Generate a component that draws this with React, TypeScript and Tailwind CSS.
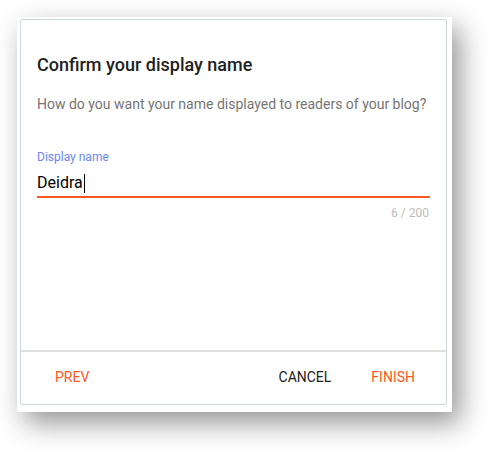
import React from "react";

export default function App() {
  return (
    <div
      className="w-[500px] h-[460px] bg-white pt-[17px] pl-[17px]"
      style={{ fontFamily: "Roboto, 'Noto Sans', Arial, sans-serif" }}
    >
      <div className="w-[435px] h-[395px] bg-white pt-[2px] pl-[3px] shadow-[8px_11px_26px_rgba(0,0,0,0.42)]">
        <div className="w-[427px] h-[386px] border border-[#cfd6dc] rounded-[3px] flex flex-col">
          <div className="flex-1 pl-[16px] pr-[16px] pt-[33px]">
            <div className="text-[18px] leading-[24px] font-medium text-[#212121]">
              Confirm your display name
            </div>
            <div className="mt-[17px] text-[14px] leading-[20px] text-[#757575]">
              How do you want your name displayed to readers of your blog?
            </div>
            <div className="mt-[35px] text-[12px] leading-[16px] text-[#6a86f5]">
              Display name
            </div>
            <div className="mt-[6px] flex items-center h-[24px] text-[16px] leading-[24px] text-black">
              <span>Deidra</span>
              <span className="inline-block w-[1px] h-[19px] bg-black ml-[1px]" />
            </div>
            <div className="mt-[1px] h-[2px] bg-[#ff5722] w-[393px]" />
            <div className="mt-[7px] text-right pr-[1px] text-[12px] leading-[16px] text-[#bdbdbd] w-[393px]">
              6 / 200
            </div>
          </div>
          <div className="h-[2px] bg-[#e0e0e0]" />
          <div className="h-[52px] pb-[2px] flex items-center pl-[34px] pr-[31px] text-[14px] font-normal">
            <span className="text-[#ff5722]">PREV</span>
            <span className="ml-auto text-[#212121]">CANCEL</span>
            <span className="ml-[40px] text-[#ff5722]">FINISH</span>
          </div>
        </div>
      </div>
    </div>
  );
}
